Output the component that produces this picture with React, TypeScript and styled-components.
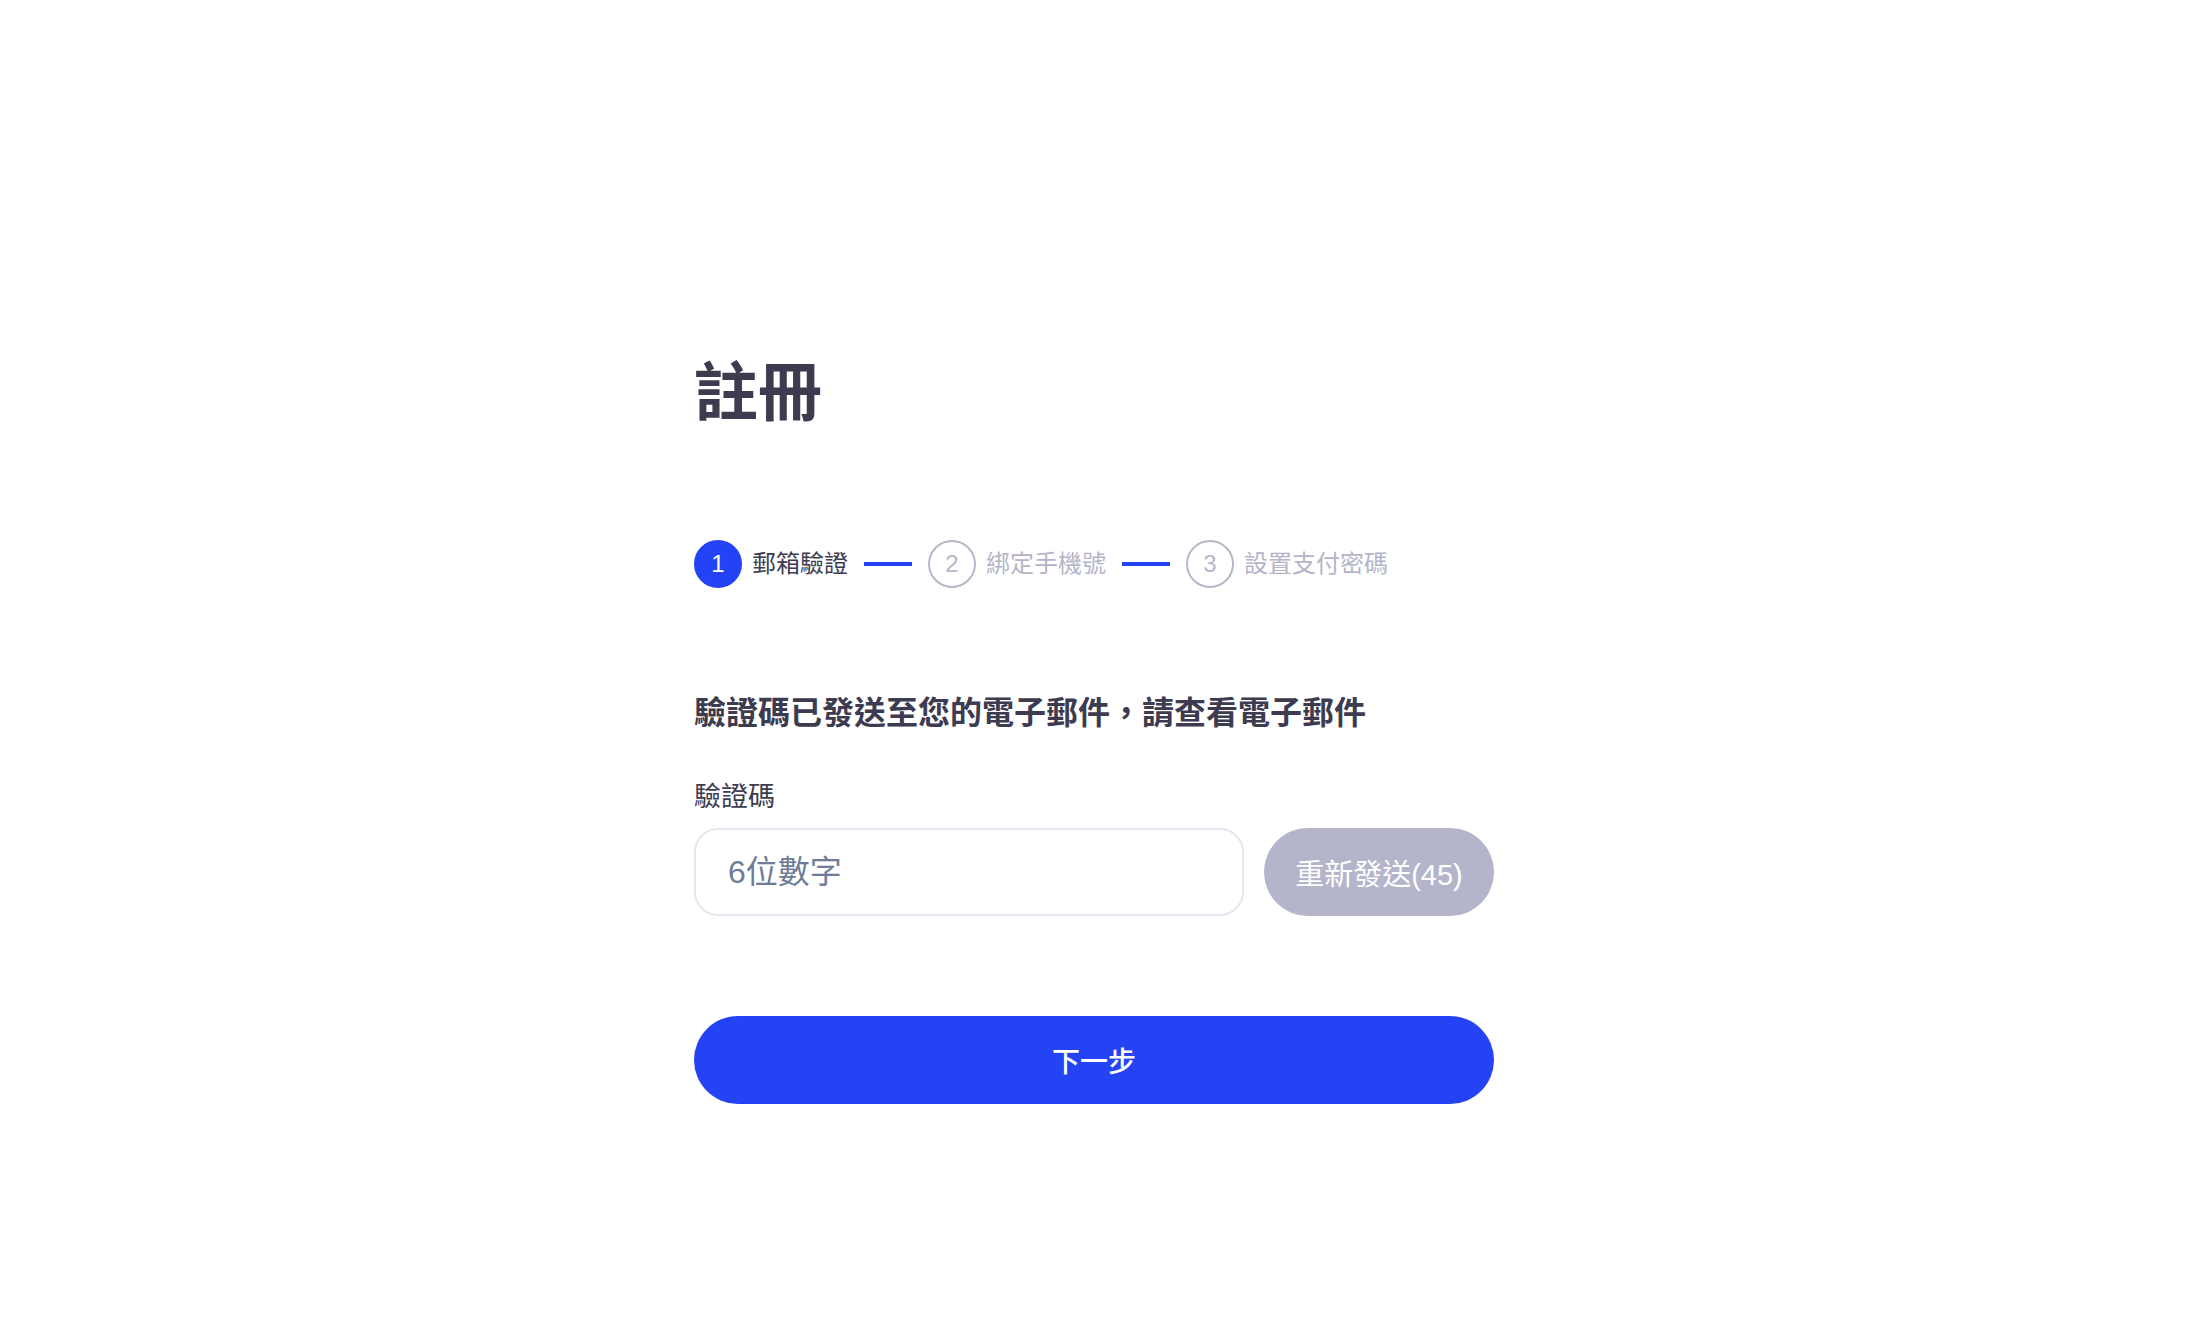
import React, { useState } from 'react';
import styled, { createGlobalStyle } from 'styled-components';

const GlobalStyle = createGlobalStyle`
  html, body {
    margin: 0;
    padding: 0;
    background: #ffffff;
  }
  body {
    font-family: "Liberation Sans", "Noto Sans CJK TC", "Noto Sans", sans-serif;
    color: #3d3b4f;
  }
`;

const steps = ['郵箱驗證', '綁定手機號', '設置支付密碼'];

const App = () => {
  const [code, setCode] = useState('');
  const current = 0;

  return (
    <>
      <GlobalStyle />
      <Page>
        <Container>
          <Title>註冊</Title>
          <Stepper>
            {steps.map((label, i) => (
              <React.Fragment key={label}>
                {i > 0 && <Connector />}
                <Step>
                  <StepNumber $active={i === current}>{i + 1}</StepNumber>
                  <StepLabel $active={i === current}>{label}</StepLabel>
                </Step>
              </React.Fragment>
            ))}
          </Stepper>
          <Notice>驗證碼已發送至您的電子郵件，請查看電子郵件</Notice>
          <Label htmlFor="code">驗證碼</Label>
          <InputRow>
            <CodeInput
              id="code"
              type="text"
              placeholder="6位數字"
              value={code}
              onChange={(e) => setCode(e.target.value)}
            />
            <ResendButton type="button" disabled>
              重新發送(45)
            </ResendButton>
          </InputRow>
          <NextButton type="button">下一步</NextButton>
        </Container>
      </Page>
    </>
  );
};

const Page = styled.div`
  min-height: 1332px;
  display: flex;
  justify-content: center;
`;

const Container = styled.div`
  width: 800px;
  padding-top: 349px;
  display: flex;
  flex-direction: column;
`;

const Title = styled.h1`
  margin: 0;
  font-family: "Noto Sans CJK TC", sans-serif;
  font-size: 64px;
  line-height: 77px;
  font-weight: 700;
  color: #3d3b4f;
`;

const Stepper = styled.div`
  display: flex;
  align-items: center;
  gap: 16px;
  margin-top: 114px;
  height: 48px;
`;

const Step = styled.div`
  display: flex;
  align-items: center;
  gap: 10px;
`;

const StepNumber = styled.span<{ $active: boolean }>`
  box-sizing: border-box;
  width: 48px;
  height: 48px;
  border-radius: 50%;
  display: flex;
  align-items: center;
  justify-content: center;
  font-size: 24px;
  color: ${(p) => (p.$active ? '#ffffff' : '#b6b7cb')};
  background: ${(p) => (p.$active ? '#2443f5' : 'transparent')};
  border: 2px solid ${(p) => (p.$active ? '#2443f5' : '#b6b7cb')};
`;

const StepLabel = styled.span<{ $active: boolean }>`
  font-size: 24px;
  line-height: 32px;
  color: ${(p) => (p.$active ? '#3d3b4f' : '#b3b4c8')};
`;

const Connector = styled.span`
  width: 48px;
  height: 4px;
  background: #2443f5;
`;

const Notice = styled.p`
  margin: 104px 0 0;
  font-size: 32px;
  line-height: 42px;
  font-weight: 700;
  color: #3d3b4f;
`;

const Label = styled.label`
  margin-top: 46px;
  font-size: 27px;
  line-height: 34px;
  color: #3d3b4f;
`;

const InputRow = styled.div`
  display: flex;
  gap: 20px;
  margin-top: 14px;
  height: 88px;
`;

const CodeInput = styled.input`
  flex: 1;
  min-width: 0;
  box-sizing: border-box;
  height: 100%;
  padding: 0 32px;
  border: 2px solid #e3e7f0;
  border-radius: 24px;
  outline: none;
  font-family: inherit;
  font-size: 32px;
  color: #3d3b4f;
  background: #ffffff;

  &::placeholder {
    color: #6f7b97;
  }
`;

const ResendButton = styled.button`
  width: 230px;
  height: 100%;
  border: none;
  border-radius: 44px;
  background: #b4b5ca;
  color: #ffffff;
  font-family: inherit;
  font-size: 29px;
  padding: 0;
  cursor: not-allowed;
`;

const NextButton = styled.button`
  margin-top: 100px;
  height: 88px;
  border: none;
  border-radius: 44px;
  background: #2443f5;
  color: #ffffff;
  font-family: inherit;
  font-size: 28px;
  font-weight: 500;
  cursor: pointer;
`;

export default App;
